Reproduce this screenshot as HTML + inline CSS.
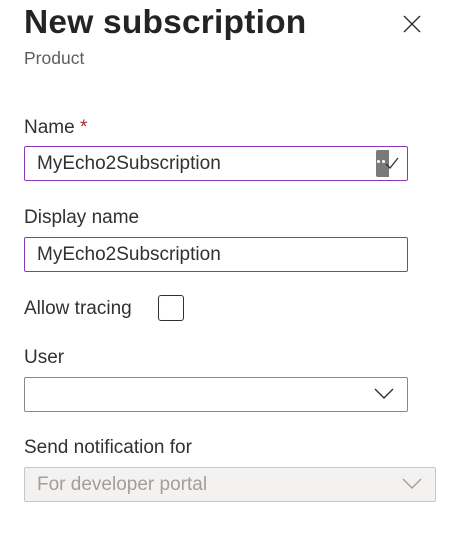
<!DOCTYPE html>
<html><head><style>
body{margin:0;width:463px;height:534px;background:#fff;font-family:"Liberation Sans",sans-serif;color:#323130;position:relative;overflow:hidden}
.a{position:absolute}
.t{left:24px;top:4px;font-size:33.5px;font-weight:bold;color:#252423;letter-spacing:0.2px}
.lbl{left:24px;font-size:19px;color:#323130}
.box{left:24px;width:382px;height:33px;border:1px solid #8a8886;border-radius:2px;font-size:19px;line-height:33px;box-sizing:content-box}
.box span{position:absolute;left:12px}
</style></head><body>
<div class="a t">New subscription</div>
<svg class="a" style="left:402px;top:14px" width="20" height="20" viewBox="0 0 20 20"><path d="M2 2L18 18M18 2L2 18" stroke="#323130" stroke-width="1.4"/></svg>
<div class="a" style="left:24px;top:48px;font-size:17.5px;color:#605e5c">Product</div>
<div class="a lbl" style="top:117px">Name <span style="color:#a4262c">*</span></div>
<div class="a box" style="top:146px;border-color:#8a3ab9"><span>MyEcho2Subscription</span>
<div class="a" style="left:351px;top:3px;width:13px;height:27px;background:#7a7a7a;border-radius:2px 0 0 2px"></div>
<div class="a" style="left:352px;top:13px;width:3px;height:3px;background:#fff;border-radius:2px"></div>
<div class="a" style="left:357px;top:13px;width:3px;height:3px;background:#fff;border-radius:2px"></div>
<svg class="a" style="left:360px;top:9px" width="14" height="14" viewBox="0 0 14 14"><path d="M1 8L5 12L13 2" stroke="#323130" stroke-width="1.3" fill="none"/></svg>
</div>
<div class="a lbl" style="top:207px">Display name</div>
<div class="a box" style="top:237px;border-color:#8a3ab9"><span>MyEcho2Subscription</span></div>
<div class="a lbl" style="top:298px">Allow tracing</div>
<div class="a" style="left:158px;top:295px;width:24px;height:24px;border:1px solid #323130;border-radius:3px"></div>
<div class="a lbl" style="top:347px">User</div>
<div class="a box" style="top:377px">
<svg class="a" style="left:349px;top:8px" width="20" height="14" viewBox="0 0 20 14"><path d="M1 3L10 12L19 3" stroke="#323130" stroke-width="1.4" fill="none"/></svg></div>
<div class="a lbl" style="top:437px">Send notification for</div>
<div class="a box" style="top:467px;width:410px;background:#f3f2f1;border-color:#c8c6c4;color:#a19f9d"><span>For developer portal</span>
<svg class="a" style="left:377px;top:8px" width="20" height="14" viewBox="0 0 20 14"><path d="M1 3L10 12L19 3" stroke="#a19f9d" stroke-width="1.4" fill="none"/></svg></div>
</body></html>
